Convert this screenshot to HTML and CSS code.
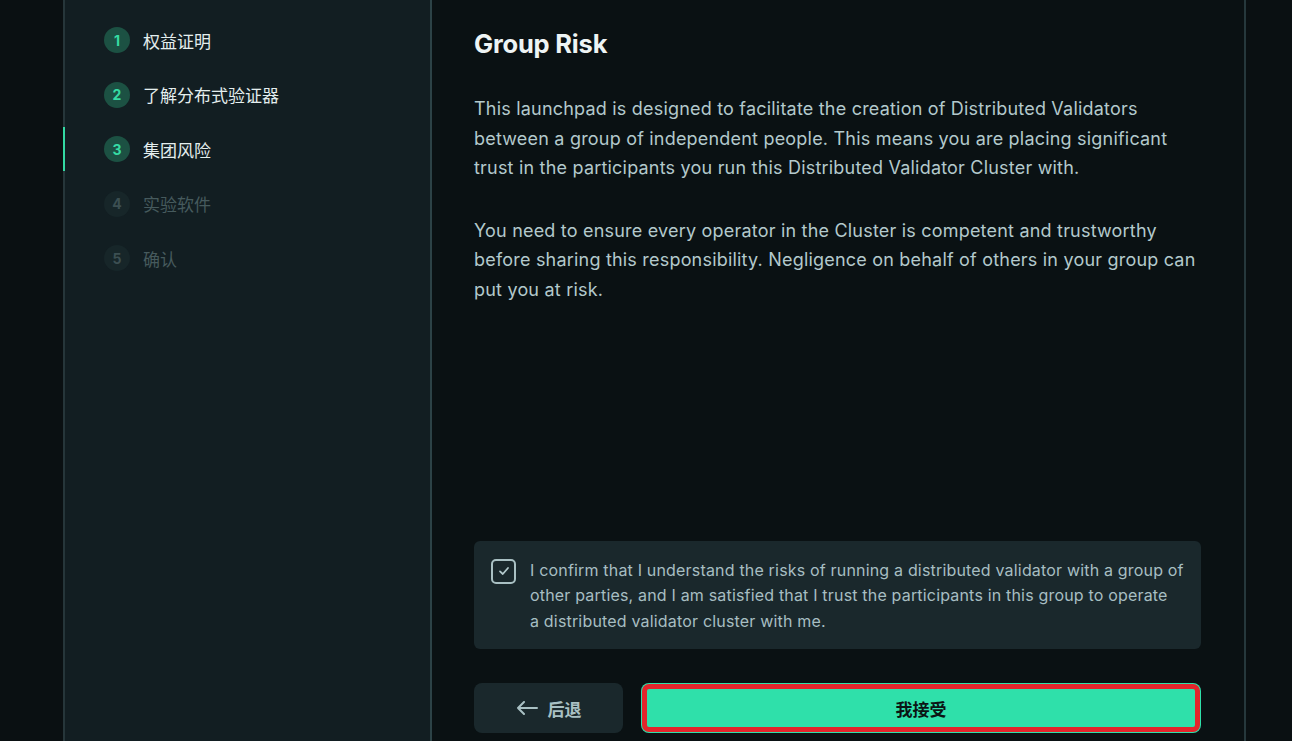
FILE: index.html
```html
<!DOCTYPE html>
<html lang="zh">
<head>
<meta charset="utf-8">
<title>Group Risk</title>
<link rel="stylesheet" href="styles.css">
</head>
<body>
<div class="page">
  <div class="frame">
    <aside class="sidebar">
      <ol class="steps">
        <li class="step done"><span class="num">1</span><span class="label">权益证明</span></li>
        <li class="step done"><span class="num">2</span><span class="label">了解分布式验证器</span></li>
        <li class="step active"><span class="num">3</span><span class="label">集团风险</span></li>
        <li class="step todo"><span class="num">4</span><span class="label">实验软件</span></li>
        <li class="step todo"><span class="num">5</span><span class="label">确认</span></li>
      </ol>
    </aside>
    <main class="main">
      <h1 class="title">Group Risk</h1>
      <p class="para">This launchpad is designed to facilitate the creation of Distributed Validators between a group of independent people. This means you are placing significant trust in the participants you run this Distributed Validator Cluster with.</p>
      <p class="para">You need to ensure every operator in the Cluster is competent and trustworthy before sharing this responsibility. Negligence on behalf of others in your group can put you at risk.</p>
      <div class="spacer"></div>
      <label class="confirm">
        <span class="checkbox">
          <svg width="14" height="14" viewBox="0 0 14 14"><path d="M3 7.4 L5.8 10 L11 4" fill="none" stroke="#b3c9cc" stroke-width="1.8" stroke-linecap="round" stroke-linejoin="round"/></svg>
        </span>
        <span class="confirm-text">I confirm that I understand the risks of running a distributed validator with a group of other parties, and I am satisfied that I trust the participants in this group to operate<br>a distributed validator cluster with me.</span>
      </label>
      <div class="actions">
        <button class="btn back">
          <svg class="arrow" width="22" height="14" viewBox="0 0 22 14"><path d="M21 7 H2 M8 1 L2 7 L8 13" fill="none" stroke="#a9c0c3" stroke-width="2" stroke-linecap="round" stroke-linejoin="round"/></svg>
          <span>后退</span>
        </button>
        <button class="btn accept">我接受</button>
      </div>
    </main>
  </div>
</div>
</body>
</html>
```
FILE: styles.css
```css
* { box-sizing: border-box; }
html, body { margin: 0; padding: 0; }
body {
  background: #0a1012;
  font-family: Inter, "Noto Sans CJK SC", sans-serif;
  width: 1292px;
  height: 741px;
  overflow: hidden;
}
.page {
  height: 741px;
  padding-left: 63px;
  padding-right: 46px;
}
.frame {
  display: flex;
  height: 100%;
  border-left: 2px solid #26363a;
  border-right: 2px solid #26383c;
}
.sidebar {
  width: 367px;
  flex: none;
  background: #121e22;
  border-right: 2px solid #2c4246;
  padding: 18px 0 0 39px;
}
.steps {
  list-style: none;
  margin: 0;
  padding: 0;
  display: flex;
  flex-direction: column;
  gap: 10.6px;
}
.step {
  position: relative;
  height: 44px;
  display: flex;
  align-items: center;
  gap: 13px;
  font-family: "Noto Sans CJK SC", sans-serif;
  font-size: 17px;
}
.num {
  width: 26px;
  height: 26px;
  border-radius: 50%;
  display: flex;
  align-items: center;
  justify-content: center;
  font-family: Inter, sans-serif;
  font-weight: 700;
  font-size: 14px;
}
.done .num, .active .num { background: #1c5143; color: #36dba4; }
.done .label, .active .label { color: #e4eeee; }
.todo .num { background: #172629; color: #3c4f52; }
.todo .label { color: #465a5d; }
.active::before {
  content: "";
  position: absolute;
  left: -41px;
  top: 0;
  width: 2px;
  height: 44px;
  background: #33d9a3;
}
.main {
  flex: 1;
  background: #0a1113;
  padding: 0 43px 8px 42px;
  display: flex;
  flex-direction: column;
}
.title {
  margin: 27px 0 0;
  font-size: 25.5px;
  line-height: 34px;
  font-weight: 700;
  color: #eef4f4;
  letter-spacing: -0.2px;
}
.para {
  margin: 33px 0 0;
  font-size: 18px;
  line-height: 29.5px;
  color: #b3c9cc;
  letter-spacing: 0.2px;
}
.para + .para { margin-top: 33px; }
.spacer { flex: 1; }
.confirm {
  display: flex;
  align-items: flex-start;
  gap: 14px;
  background: #1a282c;
  border-radius: 6px;
  padding: 17px 14px 15px 17px;
  margin-bottom: -1px;
}
.checkbox {
  flex: none;
  width: 25px;
  height: 25px;
  margin-top: 1px;
  border: 2px solid #a9c0c3;
  border-radius: 5px;
  display: flex;
  align-items: center;
  justify-content: center;
}
.confirm-text {
  font-size: 16px;
  line-height: 25.5px;
  color: #a7bec2;
  letter-spacing: 0.18px;
}
.actions {
  display: flex;
  gap: 18px;
  margin-top: 35px;
  height: 50px;
}
.btn {
  border: none;
  border-radius: 8px;
  font-family: Inter, "Noto Sans CJK SC", sans-serif;
  font-weight: 700;
  font-size: 17px;
  display: flex;
  align-items: center;
  justify-content: center;
}
.back {
  width: 149px;
  background: #1a282c;
  color: #a9c0c3;
  gap: 10px;
}
.arrow { flex: none; }
.accept {
  flex: 1;
  background: #2fe0aa;
  color: #0b1514;
  outline: 5px solid #e3252b;
  outline-offset: -6px;
}
```
